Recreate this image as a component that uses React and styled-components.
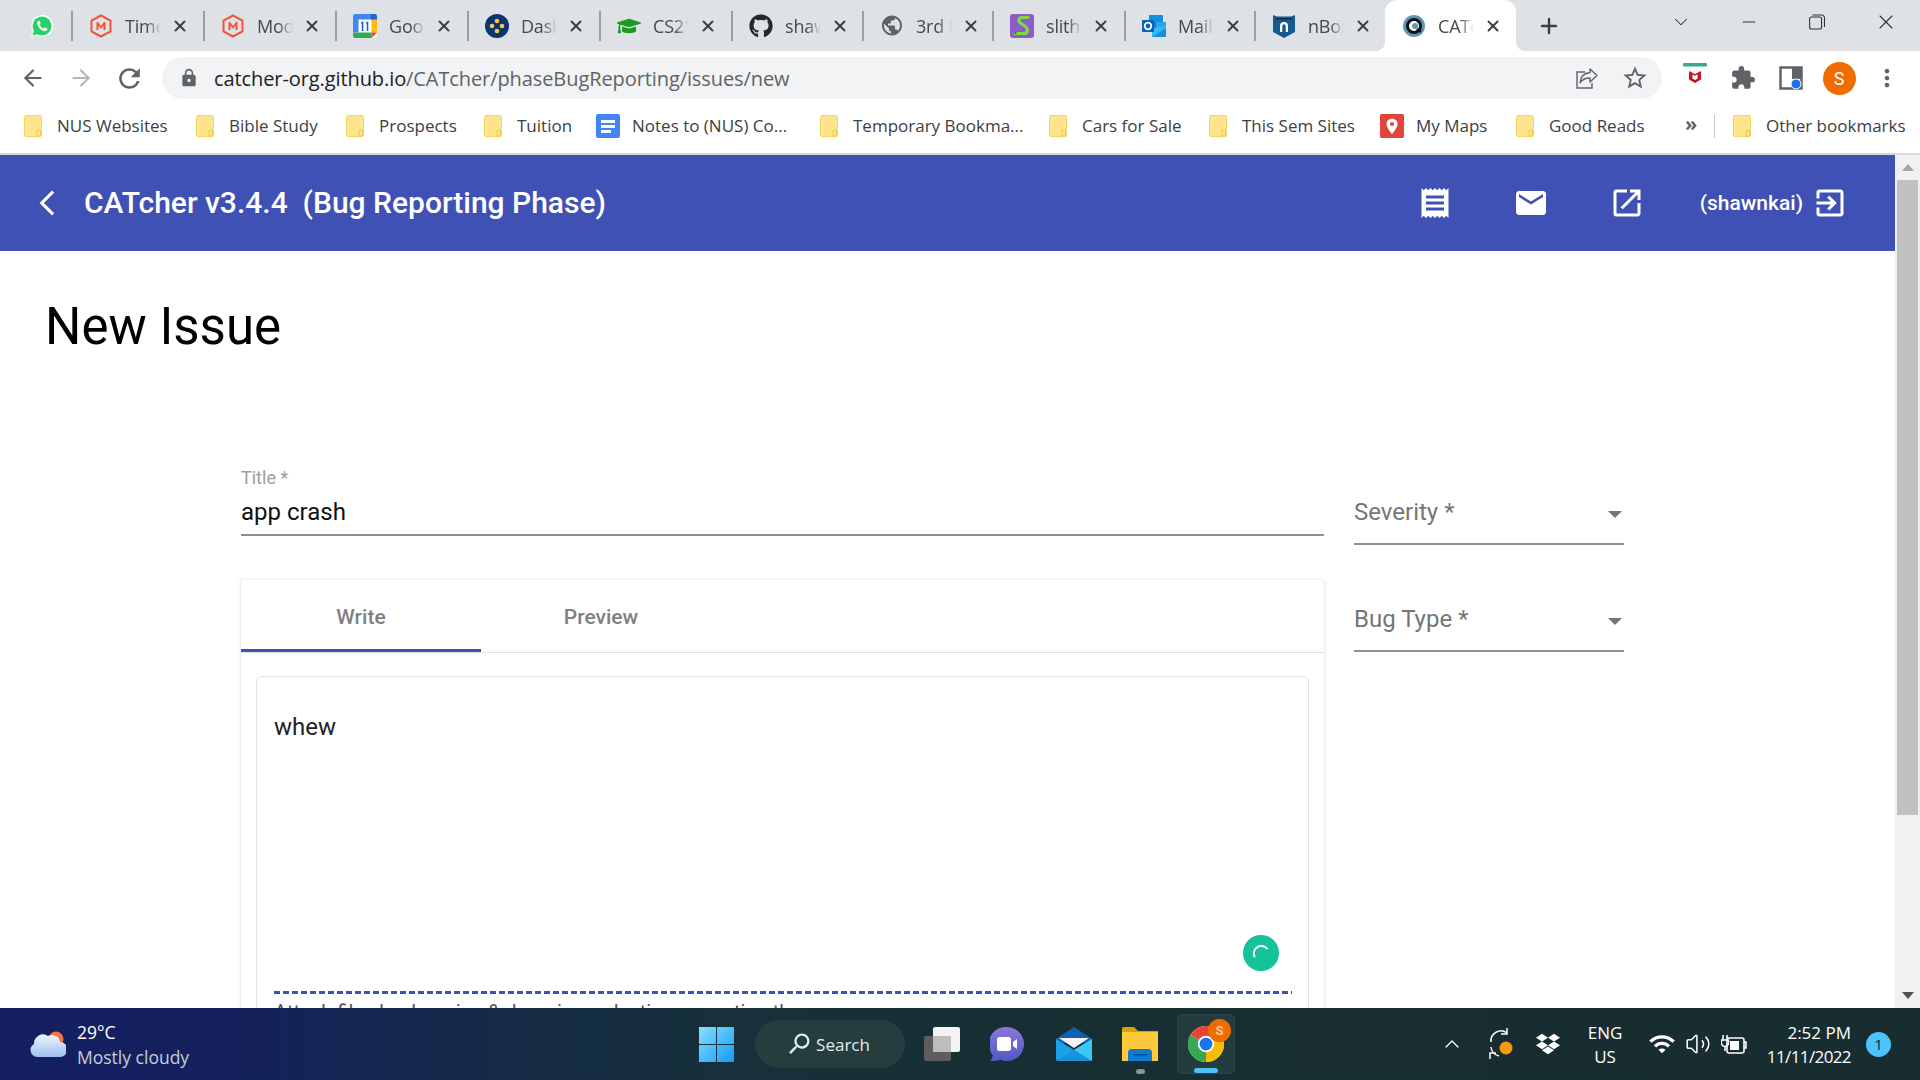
import React from "react";
import styled, { createGlobalStyle, css } from "styled-components";
import { FaGithub, FaGraduationCap, FaDropbox } from "react-icons/fa";
import {
  MdArrowBackIosNew, MdReceipt, MdEmail, MdOpenInNew, MdExitToApp, MdRefresh, MdLock,
  MdStarBorder, MdExtension, MdMoreVert, MdPublic, MdWifi, MdSearch,
} from "react-icons/md";
import { ArrowLeft, ArrowRight, X, Plus, ChevronDown, ChevronUp, Minus, Volume2 } from "lucide-react";

const UI = `"Open Sans", "Noto Sans", sans-serif`;
const RB = `Roboto, "Liberation Sans", sans-serif`;

const Global = createGlobalStyle`
  html, body { margin: 0; padding: 0; background: #fff; overflow: hidden; }
  * { box-sizing: border-box; }
`;

const Screen = styled.div`
  width: 1920px; height: 1080px; display: flex; flex-direction: column; overflow: hidden;
  font-family: ${UI};
`;

/* ---------- tab strip ---------- */
const TabStrip = styled.div`
  height: 51px; flex: none; background: #dee1e6; display: flex; align-items: stretch;
`;
const PinnedTab = styled.div`
  width: 72px; flex: none; display: flex; align-items: center; padding: 0 0 0 30px;
`;
const Tab = styled.div`
  width: ${(p) => p.$w}px; flex: none; display: flex; align-items: center; padding-left: 17px;
  position: relative; background: ${(p) => (p.$active ? "#fff" : "transparent")};
  border-radius: ${(p) => (p.$active ? "12px 12px 0 0" : "0")};
  ${(p) => p.$active && css`
    &::before, &::after {
      content: ""; position: absolute; bottom: 0; width: 10px; height: 10px;
    }
    &::before { left: -10px; background: radial-gradient(circle at 0 0, transparent 10px, #fff 10.5px); }
    &::after { right: -10px; background: radial-gradient(circle at 100% 0, transparent 10px, #fff 10.5px); }
  `}
`;
const TabSep = styled.span`
  position: absolute; left: -1px; top: 11px; width: 2px; height: 30px; background: #9a9ea3;
`;
const Fav = styled.span`
  width: 24px; height: 24px; flex: none; display: flex; align-items: center; justify-content: center;
  position: relative;
`;
const TabTitle = styled.span`
  width: 36px; margin-left: 12px; overflow: hidden; white-space: nowrap; font-size: 18px; letter-spacing: -0.2px; color: #45494e;
  -webkit-mask-image: linear-gradient(90deg, #000 60%, transparent 100%);
  mask-image: linear-gradient(90deg, #000 60%, transparent 100%);
`;
const TabClose = styled.span`
  margin-left: 10px; width: 18px; height: 18px; display: flex; align-items: center; justify-content: center; color: #3c4043;
`;
const NewTab = styled.div`
  width: 48px; margin-left: 9px; display: flex; align-items: center; justify-content: center; color: #3c4043;
`;
const WinControls = styled.div`
  margin-left: auto; display: flex; align-items: flex-start;
`;
const WinBtn = styled.span`
  width: ${(p) => p.$w}px; height: 44px; display: flex; align-items: center; justify-content: center; color: #2f3336;
`;

/* ---------- toolbar ---------- */
const Toolbar = styled.div`
  height: 51px; flex: none; background: #fff; display: flex; align-items: center; padding: 3px 0 0 9px;
`;
const ToolBtn = styled.span`
  width: 48px; height: 42px; flex: none; display: flex; align-items: center; justify-content: center;
  color: ${(p) => p.$c || "#5f6368"};
`;
const Omnibox = styled.div`
  width: 1500px; height: 42px; margin-left: 9px; flex: none; background: #f1f3f4; border-radius: 21px;
  display: flex; align-items: center; padding: 0 3px 0 17px;
`;
const Url = styled.div`
  margin-left: 15px; font-size: 20px; letter-spacing: -0.09px; color: #5f6368; white-space: nowrap; flex: 1;
`;
const Host = styled.span` color: #202124; `;
const Extensions = styled.div`
  margin-left: 9px; display: flex; align-items: center;
`;
const Avatar = styled.span`
  width: 33px; height: 33px; border-radius: 50%; background: #ef6c00; color: #fff; font-family: ${RB};
  font-size: 18px; display: flex; align-items: center; justify-content: center;
`;

/* ---------- bookmarks ---------- */
const Bookmarks = styled.div`
  height: 53px; flex: none; background: #fff; border-bottom: 2px solid #d9d9d9; display: flex; align-items: center; padding: 0 0 4px 24px;
`;
const Mark = styled.div`
  display: flex; align-items: center; flex: none; margin-right: ${(p) => p.$mr}px;
`;
const MarkIcon = styled.span`
  width: ${(p) => p.$w || 18}px; margin-right: ${(p) => p.$gap || 15}px; display: flex; flex: none;
`;
const MarkLabel = styled.span`
  width: ${(p) => p.$w}px; font-size: 17px; color: #3c4043; white-space: nowrap; flex: none; margin-top: -1px;
`;
const Overflow = styled.span`
  margin-left: 40px; width: 16px; font-size: 20px; font-weight: 700; color: #5f6368; line-height: 1; flex: none; margin-top: -4px;
`;
const MarkDivider = styled.span`
  width: 1px; height: 24px; background: #c8cacc; margin: 0 18px 0 13px; flex: none;
`;

/* ---------- page ---------- */
const Viewport = styled.div`
  height: 853px; flex: none; display: flex; overflow: hidden;
`;
const Page = styled.div`
  width: 1895px; flex: none; background: #fff; overflow: hidden; font-family: ${RB};
`;
const AppBar = styled.header`
  height: 96px; background: #3f51b5; color: #fff; display: flex; align-items: center; padding-left: 32px; padding-right: 47px;
`;
const AppTitle = styled.div`
  margin: -2px 0 0 16px; font-size: 30px; font-weight: 500; white-space: pre;
`;
const AppIcon = styled.span`
  width: 36px; height: 36px; display: flex; margin-left: ${(p) => p.$ml || 0}px; flex: none;
`;
const UserName = styled.span`
  margin-left: ${(p) => p.$ml}px; font-size: 21px; font-weight: 500; white-space: nowrap;
`;
const Spacer = styled.span` flex: 1; `;
const Heading = styled.h1`
  margin: 46px 0 0 45px; font-size: 51px; line-height: 60px; font-weight: 400; color: #000;
`;
const Form = styled.div`
  margin-top: 110px; padding-left: 241px; display: flex; align-items: flex-start; gap: 30px;
`;
const MainCol = styled.div` width: 1083px; flex: none; `;
const SideCol = styled.div` width: 270px; flex: none; `;
const FieldLabel = styled.div`
  font-size: 18px; line-height: 22px; color: #9e9e9e;
`;
const FieldValue = styled.div`
  margin-top: 9px; font-size: 24px; line-height: 28px; color: #111; padding-bottom: 8px; border-bottom: 2px solid #8f8f8f;
`;
const SelectField = styled.div`
  padding-top: 31px; margin-bottom: 29px; padding-bottom: 17px; border-bottom: 2px solid #8f8f8f;
  display: flex; align-items: center; justify-content: space-between; font-size: 24px; line-height: 28px; color: #757575;
`;
const Caret = styled.span`
  width: 0; height: 0; margin: 5px 2px 0 0; border-left: 7.5px solid transparent; border-right: 7.5px solid transparent; border-top: 7.5px solid #757575;
`;
const Card = styled.div`
  margin-top: 44px; background: #fff; box-shadow: 0 1px 4px rgba(0,0,0,.16), 0 0 1px rgba(0,0,0,.1); padding-bottom: 30px;
`;
const TabRow = styled.div`
  display: flex; height: 73px; border-bottom: 1px solid #e0e0e0;
`;
const ContentTab = styled.div`
  width: 240px; height: 72px; display: flex; align-items: center; justify-content: center; font-size: 21px; font-weight: 500; color: #808080;
  border-bottom: 3px solid ${(p) => (p.$active ? "#3f51b5" : "transparent")}; padding-top: 5px;
`;
const Editor = styled.div`
  position: relative; margin: 23px 15px 0; border: 1px solid #e1e1e1; border-radius: 6px; padding: 36px 16px 20px 17px; height: 420px;
`;
const EditorText = styled.div`
  height: 278px; font-size: 24px; line-height: 28px; color: #222;
`;
const DashRule = styled.div`
  height: 3px; background: repeating-linear-gradient(90deg, #3f51b5 0 6px, transparent 6px 9px);
`;
const Hint = styled.div`
  margin-top: 7px; font-size: 20px; line-height: 23px; color: #555; white-space: nowrap;
`;
const Grammarly = styled.span`
  position: absolute; right: 29px; top: 258px; width: 36px; height: 36px; border-radius: 50%; background: #15c39a; display: flex; align-items: center; justify-content: center;
`;

/* ---------- scrollbar ---------- */
const ScrollTrack = styled.div`
  width: 25px; flex: none; background: #f1f1f1; display: flex; flex-direction: column;
`;
const ScrollArrow = styled.div`
  height: 25px; flex: none; display: flex; align-items: center; justify-content: center;
`;
const ArrowGlyph = styled.span`
  width: 0; height: 0; border-left: 6px solid transparent; border-right: 6px solid transparent;
  ${(p) => (p.$down ? "border-top: 7px solid #505050;" : "border-bottom: 7px solid #a3a3a3;")}
`;
const ScrollThumb = styled.div`
  height: 635px; flex: none; margin: 0 2px; background: #c1c1c1;
`;

/* ---------- taskbar ---------- */
const Taskbar = styled.footer`
  height: 72px; flex: none; display: flex; align-items: center; color: #fff;
  background: linear-gradient(90deg, #141f63 0, #14215c 12%, #152c44 28%, #17303a 38%, #172e32 60%, #172d30 100%);
`;
const Weather = styled.div`
  width: 699px; flex: none; display: flex; align-items: center; padding-left: 30px;
`;
const WeatherText = styled.div`
  margin: 2px 0 0 11px; font-size: 17.5px; line-height: 25px; white-space: nowrap;
`;
const WeatherSub = styled.div` color: #c8ced6; `;
const TaskCenter = styled.div`
  width: 537px; flex: none; display: flex; align-items: center;
`;
const SearchPill = styled.div`
  width: 150px; height: 48px; margin: 0 19px 0 21px; flex: none; border-radius: 24px; background: #243e40; display: flex; align-items: center; justify-content: center; gap: 3px; padding-right: 5px; font-size: 17px; color: #e6ecec;
`;
const TaskIcon = styled.span`
  display: flex; flex: none; position: relative; margin-left: ${(p) => p.$ml || 0}px;
`;
const RunDot = styled.span`
  position: absolute; left: 14px; bottom: -13px; width: 9px; height: 5px; border-radius: 3px; background: #8a9494;
`;
const ActiveTile = styled.div`
  width: 58px; height: 60px; margin-left: 19px; flex: none; border-radius: 6px; background: #233c3e; box-shadow: inset 0 0 0 1px #2c4648; position: relative; display: flex; align-items: center; justify-content: center;
`;
const ActiveBar = styled.span`
  position: absolute; left: 17px; bottom: 1px; width: 24px; height: 5px; border-radius: 3px; background: #4cc2ff;
`;
const Badge = styled.span`
  position: absolute; right: 4px; top: 5px; width: 23px; height: 23px; border-radius: 50%; background: #ef6c00; color: #fbc9a0; font-size: 13px; font-weight: 700; font-family: ${RB}; display: flex; align-items: center; justify-content: center;
`;
const Tray = styled.div`
  flex: 1; display: flex; align-items: center;
`;
const TrayIcon = styled.span`
  width: ${(p) => p.$w || 32}px; margin-left: ${(p) => p.$ml}px; flex: none; display: flex; align-items: center; justify-content: center; color: #fff;
`;
const Lang = styled.div`
  width: 50px; margin: 2px 0 0 ${(p) => p.$ml}px; text-align: center; font-size: 17px; line-height: 24px; flex: none;
`;
const Clock = styled.div`
  width: 100px; margin: 2px 0 0 ${(p) => p.$ml}px; text-align: right; font-size: 17px; line-height: 24px; white-space: nowrap; flex: none;
`;
const ClockDate = styled.div` letter-spacing: -0.6px; `;
const Notif = styled.span`
  width: 25px; height: 25px; margin-left: 15px; flex: none; border-radius: 50%; background: #4cc2ff; color: #10262e; font-size: 15px; display: flex; align-items: center; justify-content: center;
`;

/* ---------- drawings ---------- */
const Folder = () => (
  <svg width="18" height="22" viewBox="0 0 18 22">
    <rect x=".5" y=".5" width="17" height="21" rx="1.5" fill="#fde48f" stroke="#f7d560" />
    <rect x="13" y="15" width="3.5" height="6" rx="1" fill="none" stroke="#f1c83e" />
  </svg>
);
const DocsIcon = () => (
  <svg width="24" height="24" viewBox="0 0 24 24">
    <rect width="24" height="24" rx="2" fill="#4285f4" />
    <path d="M5 6h14v3H5zM5 11h14v3H5zM5 16h10v3H5z" fill="#fff" />
  </svg>
);
const MapsIcon = () => (
  <svg width="24" height="24" viewBox="0 0 24 24">
    <rect width="24" height="24" rx="1.5" fill="#e0443a" />
    <path d="M12 4.500a5.600 5.600 0 0 0-5.600 5.600C6.400 14 12 20 12 20s5.600-6 5.600-9.900A5.600 5.600 0 0 0 12 4.500z" fill="#fff" />
    <circle cx="12" cy="10" r="2" fill="#e0443a" />
  </svg>
);
const MHex = () => (
  <svg width="22" height="24" viewBox="0 0 22 24">
    <path d="M11 1.500 20.500 6.500v11L11 22.500 1.500 17.500v-11z" fill="none" stroke="#f4533a" strokeWidth="2" />
    <path d="M6.500 16V8h1.600L11 12l2.900-4h1.600v8h-2v-4.600L11 15l-2.500-3.600V16z" fill="#f4533a" />
  </svg>
);
const WhatsApp = () => (
  <svg width="24" height="24" viewBox="0 0 24 24">
    <path d="M1 23l1.700-6A11 11 0 1 1 7 21.400z" fill="#fff" />
    <circle cx="12" cy="12" r="9.500" fill="#25d366" />
    <path d="M2.500 21.500l1.500-5 4 3.500z" fill="#25d366" />
    <path d="M8.500 6.800c-.8.500-1.800 1.700-1.200 3.700.8 2.600 3.700 5.700 6.500 6.500 1.800.5 3-.4 3.500-1.300.2-.4.200-.9 0-1.100l-2.200-1.200c-.3-.1-.5 0-.7.300l-.8 1c-1.300-.3-3.300-2.400-3.800-3.700l.8-.9c.2-.2.200-.5.100-.7l-1-2.300c-.2-.4-.4-.5-.7-.3z" fill="#fff" />
  </svg>
);
const Calendar = () => (
  <svg width="24" height="24" viewBox="0 0 24 24">
    <rect width="24" height="24" rx="2" fill="#fff" />
    <path d="M2 0h16v5.500H5.500V18.500H0V2a2 2 0 0 1 2-2z" fill="#4285f4" />
    <path d="M18 0h4a2 2 0 0 1 2 2v4h-6z" fill="#1967d2" />
    <path d="M18.500 5.500H24v13h-5.500z" fill="#fbbc04" />
    <path d="M0 18.500h18.500V24H2a2 2 0 0 1-2-2z" fill="#34a853" />
    <path d="M18.500 18.500H24L18.500 24z" fill="#ea4335" />
    <path d="M8 8.500l1.500-1h.8v9.500H8.800V9.300L8 9.800zM13 8.500l1.500-1h.8v9.500h-1.500V9.300L13 9.800z" fill="#1a5fc8" />
  </svg>
);
const DashFav = () => (
  <svg width="24" height="24" viewBox="0 0 24 24">
    <circle cx="12" cy="12" r="12" fill="#0c3570" />
    <circle cx="12" cy="7" r="2.300" fill="#f6c945" />
    <circle cx="7" cy="12" r="2.300" fill="#f6c945" />
    <circle cx="17" cy="12" r="2.300" fill="#f6c945" />
    <circle cx="12" cy="17" r="2.300" fill="#f6c945" />
  </svg>
);
const Slither = () => (
  <svg width="24" height="24" viewBox="0 0 24 24">
    <rect width="24" height="24" rx="3" fill="#8e5bc9" />
    <path d="M18 3.500H12C8 3.500 8.500 8 11 9.500L15 12C18.500 14.500 18 19.500 14 19.500H5" fill="none" stroke="#7ddc3e" strokeWidth="3.200" strokeLinecap="round" />
    <circle cx="5.500" cy="19" r="1.200" fill="#274" />
  </svg>
);
const Outlook = () => (
  <svg width="24" height="24" viewBox="0 0 24 24">
    <path d="M7 1h13a1 1 0 0 1 1 1v6H7z" fill="#1490df" />
    <path d="M14 8h10v8H14z" fill="#28a8ea" />
    <path d="M7 8h7v8H7z" fill="#0f78d4" />
    <path d="M10 14 24 12v10a1 1 0 0 1-1 1H10z" fill="#35b8f1" />
    <path d="M10 23l14-9v8a1 1 0 0 1-1 1z" fill="#1490df" />
    <rect y="6" width="12" height="12" rx="1" fill="#0364b8" />
    <circle cx="6" cy="12" r="3.300" fill="none" stroke="#fff" strokeWidth="1.800" />
  </svg>
);
const NBox = () => (
  <svg width="22" height="24" viewBox="0 0 22 24">
    <path d="M0 1l4 1.500h14L22 1v17l-11 6-11-6z" fill="#14598f" />
    <path d="M3 4h16v1.500H3z" fill="#0b2f4f" />
    <path d="M7 18v-6a4 4 0 0 1 8 0v6h-2.300v-6a1.700 1.700 0 0 0-3.400 0v6z" fill="#fff" />
  </svg>
);
const CatFav = () => (
  <svg width="22" height="22" viewBox="0 0 22 22">
    <circle cx="11" cy="11" r="11" fill="#5e97b4" />
    <circle cx="11" cy="11" r="6.500" fill="#fff" stroke="#111" strokeWidth="3" />
    <circle cx="12" cy="11" r="3" fill="#5e97b4" />
    <path d="M14 14l4 3" stroke="#111" strokeWidth="2.500" />
  </svg>
);
const ShareIcon = () => (
  <svg width="24" height="24" viewBox="0 0 24 24" fill="none" stroke="#5f6368" strokeWidth="1.400">
    <path d="M15 3l7 6.500-7 6.500v-4c-5 0-8 1.500-10 5 .5-6 4-10 10-10.500z" strokeLinejoin="round" />
    <path d="M10 6H2v16h15v-5" />
  </svg>
);
const McAfee = () => (
  <svg width="24" height="24" viewBox="0 0 24 24" style={{ marginTop: -6 }}>
    <rect width="24" height="3.500" rx="1" fill="#3fa687" />
    <path d="M6 8l6 3 6-3v8.500L12 20l-6-3.500z" fill="#c8161d" />
    <path d="M9.500 11.500l2.500 1.200 2.500-1.200v4l-2.500 1.400-2.500-1.400z" fill="#fff" />
  </svg>
);
const SidePanel = () => (
  <svg width="24" height="24" viewBox="0 0 24 24">
    <path d="M1.500 1.500h21v21h-21z" fill="none" stroke="#5f6368" strokeWidth="2.500" />
    <rect x="13" y="1" width="10" height="12" fill="#5f6368" />
    <circle cx="17" cy="18" r="5" fill="#1a73e8" stroke="#fff" />
  </svg>
);
const WeatherIcon = () => (
  <svg width="36" height="26" viewBox="0 0 36 26">
    <defs>
      <linearGradient id="wc" x1="0" y1="0" x2="0" y2="1">
        <stop offset="0" stopColor="#eef5ff" />
        <stop offset="1" stopColor="#9dc0ec" />
      </linearGradient>
    </defs>
    <circle cx="26" cy="8" r="7.500" fill="#f8743c" />
    <path d="M7 26a7 7 0 0 1-3-13 9 9 0 0 1 14-8 8 8 0 0 1 12 6 7.500 7.500 0 0 1 0 15z" fill="url(#wc)" />
  </svg>
);
const WindowsLogo = () => (
  <svg width="35" height="35" viewBox="0 0 35 35">
    <defs>
      <linearGradient id="wl" x1="0" y1="0" x2="1" y2="1">
        <stop offset="0" stopColor="#86e0ff" />
        <stop offset="1" stopColor="#129cf5" />
      </linearGradient>
    </defs>
    <path d="M0 0h17v17H0zM18 0h17v17H18zM0 18h17v17H0zM18 18h17v17H18z" fill="url(#wl)" />
  </svg>
);
const TaskView = () => (
  <svg width="36" height="34" viewBox="0 0 36 34">
    <rect x="0" y="9" width="27" height="25" rx="2" fill="#5d5d5d" />
    <rect x="9" y="0" width="27" height="25" rx="2" fill="#f3f3f3" />
    <rect x="9" y="9" width="18" height="16" fill="#bdbdbd" />
  </svg>
);
const TeamsIcon = () => (
  <svg width="34" height="34" viewBox="0 0 34 34">
    <defs>
      <linearGradient id="tm" x1="0" y1="0" x2="0" y2="1">
        <stop offset="0" stopColor="#8a78d6" />
        <stop offset="1" stopColor="#5059c9" />
      </linearGradient>
    </defs>
    <path d="M17 0a17 17 0 1 1-6.500 32.700C7 34 3 34 0 34c1.800-1.500 2.600-3.500 2.700-6A17 17 0 0 1 17 0z" fill="url(#tm)" />
    <rect x="7" y="10" width="14" height="14" rx="2.500" fill="#fff" />
    <path d="M23 15l4-3v10l-4-3z" fill="#fff" />
  </svg>
);
const MailIcon = () => (
  <svg width="36" height="34" viewBox="0 0 36 34">
    <path d="M0 12 18 0l18 12v4H0z" fill="#0c62b5" />
    <path d="M3 11h30L18 21z" fill="#f4f4f4" />
    <path d="M0 12l18 11 18-11v20a2 2 0 0 1-2 2H2a2 2 0 0 1-2-2z" fill="#1ea0e6" />
    <path d="M36 12v22L18 23z" fill="#3cc7f4" />
    <path d="M0 34h36L18 23z" fill="#128bd8" opacity=".6" />
  </svg>
);
const FilesIcon = () => (
  <svg width="36" height="34" viewBox="0 0 36 34">
    <path d="M0 2a2 2 0 0 1 2-2h10l4 4h20v8H0z" fill="#d9a106" />
    <path d="M0 5h36v29H0z" fill="#fdc93c" />
    <path d="M6 26a4 4 0 0 1 4-4h16a4 4 0 0 1 4 4v8H6z" fill="#0f7bd0" />
    <rect x="11" y="27" width="14" height="1.500" fill="#0a4f8f" />
  </svg>
);
const ChromeIcon = () => (
  <svg width="36" height="36" viewBox="0 0 48 48">
    <circle cx="24" cy="24" r="24" fill="#fff" />
    <path d="M24 24 3.200 12A24 24 0 0 1 44.800 12z" fill="#ea4335" />
    <path d="M24 24 44.800 12A24 24 0 0 1 24 48z" fill="#fbbc04" />
    <path d="M24 24 24 48A24 24 0 0 1 3.200 12z" fill="#34a853" />
    <circle cx="24" cy="24" r="11" fill="#fff" />
    <circle cx="24" cy="24" r="8.500" fill="#1a73e8" />
  </svg>
);
const SyncIcon = () => (
  <svg width="26" height="32" viewBox="0 0 26 32" fill="none" stroke="#fff" strokeWidth="1.500">
    <path d="M3 14A10 10 0 0 1 19 5M19 0v6h-6" />
    <path d="M3 19a10 10 0 0 0 8 9M2 31v-6h6" />
    <circle cx="18" cy="20" r="6.500" fill="#f59a0c" stroke="none" />
  </svg>
);
const BatteryIcon = () => (
  <svg width="26" height="30" viewBox="0 0 26 30" fill="none" stroke="#fff" strokeWidth="1.600">
    <rect x="6" y="9" width="17" height="15" rx="2" />
    <rect x="9" y="12" width="9" height="9" fill="#fff" stroke="none" />
    <path d="M23 13h2v6h-2" />
    <path d="M2 6v5M6 6v5M0.500 11h7v3a3.500 3.500 0 0 1-7 0zM4 17v5" strokeWidth="1.500" />
  </svg>
);

const TABS = [
  { t: "Time", w: 132, i: <MHex /> },
  { t: "Mod", w: 132, i: <MHex /> },
  { t: "Goog", w: 132, i: <Calendar /> },
  { t: "Dash", w: 132, i: <DashFav /> },
  { t: "CS21", w: 132, i: <FaGraduationCap size={24} color="#1a9a1e" /> },
  { t: "shaw", w: 131, i: <FaGithub size={24} color="#24292e" /> },
  { t: "3rd L", w: 130, i: <MdPublic size={27} color="#5f6368" /> },
  { t: "slithe", w: 132, i: <Slither /> },
  { t: "Mail", w: 130, i: <Outlook /> },
  { t: "nBox", w: 130, i: <NBox /> },
];

const MARKS = [
  { l: "NUS Websites", w: 112, mr: 27 },
  { l: "Bible Study", w: 88, mr: 29 },
  { l: "Prospects", w: 76, mr: 29 },
  { l: "Tuition", w: 54, mr: 25 },
  { l: "Notes to (NUS) Co...", w: 160, mr: 28, icon: <DocsIcon />, iw: 24, gap: 12 },
  { l: "Temporary Bookma...", w: 167, mr: 29 },
  { l: "Cars for Sale", w: 99, mr: 28 },
  { l: "This Sem Sites", w: 113, mr: 25 },
  { l: "My Maps", w: 73, mr: 27, icon: <MapsIcon />, iw: 24, gap: 12 },
  { l: "Good Reads", w: 96, mr: 0 },
];

export default function App() {
  return (
    <Screen>
      <Global />
      <TabStrip>
        <PinnedTab><Fav><WhatsApp /></Fav></PinnedTab>
        {TABS.map((x, i) => (
          <Tab key={i} $w={x.w}>
            <TabSep />
            <Fav>{x.i}</Fav>
            <TabTitle>{x.t}</TabTitle>
            <TabClose><X size={18} strokeWidth={2.6} /></TabClose>
          </Tab>
        ))}
        <Tab $active $w={131}>
          <Fav><CatFav /></Fav>
          <TabTitle>CATc</TabTitle>
          <TabClose><X size={18} strokeWidth={2.6} /></TabClose>
        </Tab>
        <NewTab><Plus size={24} strokeWidth={2.4} /></NewTab>
        <WinControls>
          <WinBtn $w={68}><ChevronDown size={22} strokeWidth={1.1} /></WinBtn>
          <WinBtn $w={68}><Minus size={20} strokeWidth={1.3} /></WinBtn>
          <WinBtn $w={68}>
            <svg width="16" height="16" viewBox="0 0 16 16" fill="none" stroke="#2f3336" strokeWidth="1.100"><rect x=".6" y="3" width="12" height="12" rx="2" /><path d="M3.500 1h9a3 3 0 0 1 3 3v9" /></svg>
          </WinBtn>
          <WinBtn $w={69}><X size={24} strokeWidth={1.1} /></WinBtn>
        </WinControls>
      </TabStrip>

      <Toolbar>
        <ToolBtn><ArrowLeft size={26} strokeWidth={2} /></ToolBtn>
        <ToolBtn $c="#b4b6b9"><ArrowRight size={26} strokeWidth={2} /></ToolBtn>
        <ToolBtn><MdRefresh size={31} /></ToolBtn>
        <Omnibox>
          <MdLock size={20} color="#5f6368" />
          <Url><Host>catcher-org.github.io</Host>/CATcher/phaseBugReporting/issues/new</Url>
          <ToolBtn><ShareIcon /></ToolBtn>
          <ToolBtn><MdStarBorder size={28} /></ToolBtn>
        </Omnibox>
        <Extensions>
          <ToolBtn><McAfee /></ToolBtn>
          <ToolBtn><MdExtension size={26} /></ToolBtn>
          <ToolBtn><SidePanel /></ToolBtn>
          <ToolBtn><Avatar>S</Avatar></ToolBtn>
          <ToolBtn><MdMoreVert size={28} /></ToolBtn>
        </Extensions>
      </Toolbar>

      <Bookmarks>
        {MARKS.map((m) => (
          <Mark key={m.l} $mr={m.mr}>
            <MarkIcon $w={m.iw} $gap={m.gap}>{m.icon || <Folder />}</MarkIcon>
            <MarkLabel $w={m.w}>{m.l}</MarkLabel>
          </Mark>
        ))}
        <Overflow>»</Overflow>
        <MarkDivider />
        <Mark $mr={0}>
          <MarkIcon><Folder /></MarkIcon>
          <MarkLabel $w={138}>Other bookmarks</MarkLabel>
        </Mark>
      </Bookmarks>

      <Viewport>
        <Page>
          <AppBar>
            <AppIcon><MdArrowBackIosNew size={30} style={{ marginTop: 3 }} /></AppIcon>
            <AppTitle>CATcher v3.4.4  (Bug Reporting Phase)</AppTitle>
            <Spacer />
            <AppIcon><MdReceipt size={36} /></AppIcon>
            <AppIcon $ml={60}><MdEmail size={36} /></AppIcon>
            <AppIcon $ml={60}><MdOpenInNew size={36} /></AppIcon>
            <UserName $ml={55}>(shawnkai)</UserName>
            <AppIcon $ml={9}><MdExitToApp size={36} /></AppIcon>
          </AppBar>
          <Heading>New Issue</Heading>
          <Form>
            <MainCol>
              <FieldLabel>Title *</FieldLabel>
              <FieldValue>app crash</FieldValue>
              <Card>
                <TabRow>
                  <ContentTab $active>Write</ContentTab>
                  <ContentTab>Preview</ContentTab>
                </TabRow>
                <Editor>
                  <EditorText>whew</EditorText>
                  <DashRule />
                  <Hint>Attach files by dragging &amp; dropping, selecting or pasting them.</Hint>
                  <Grammarly>
                    <svg width="24" height="24" viewBox="0 0 24 24" fill="none" stroke="#fff" strokeWidth="2" strokeLinecap="round"><path d="M5.500 15.500A7.500 7.500 0 0 1 18 7.500" /></svg>
                  </Grammarly>
                </Editor>
              </Card>
            </MainCol>
            <SideCol>
              <SelectField>Severity *<Caret /></SelectField>
              <SelectField>Bug Type *<Caret /></SelectField>
            </SideCol>
          </Form>
        </Page>
        <ScrollTrack>
          <ScrollArrow><ArrowGlyph /></ScrollArrow>
          <ScrollThumb />
          <Spacer />
          <ScrollArrow><ArrowGlyph $down /></ScrollArrow>
        </ScrollTrack>
      </Viewport>

      <Taskbar>
        <Weather>
          <WeatherIcon />
          <WeatherText>
            29°C
            <WeatherSub>Mostly cloudy</WeatherSub>
          </WeatherText>
        </Weather>
        <TaskCenter>
          <WindowsLogo />
          <SearchPill><MdSearch size={28} style={{ transform: "scaleX(-1)" }} />Search</SearchPill>
          <TaskIcon><TaskView /></TaskIcon>
          <TaskIcon $ml={30}><TeamsIcon /></TaskIcon>
          <TaskIcon $ml={32}><MailIcon /></TaskIcon>
          <TaskIcon $ml={30}><FilesIcon /><RunDot /></TaskIcon>
          <ActiveTile>
            <ChromeIcon />
            <Badge>S</Badge>
            <ActiveBar />
          </ActiveTile>
        </TaskCenter>
        <Tray>
          <TrayIcon $ml={204} $w={24}><ChevronUp size={24} strokeWidth={1.3} /></TrayIcon>
          <TrayIcon $ml={21}><SyncIcon /></TrayIcon>
          <TrayIcon $ml={15}><FaDropbox size={24} /></TrayIcon>
          <Lang $ml={16}>ENG<br />US</Lang>
          <TrayIcon $ml={16}><MdWifi size={28} /></TrayIcon>
          <TrayIcon $ml={4}><Volume2 size={26} strokeWidth={1.4} /></TrayIcon>
          <TrayIcon $ml={4}><BatteryIcon /></TrayIcon>
          <Clock $ml={1}>2:52 PM<ClockDate>11/11/2022</ClockDate></Clock>
          <Notif>1</Notif>
        </Tray>
      </Taskbar>
    </Screen>
  );
}
